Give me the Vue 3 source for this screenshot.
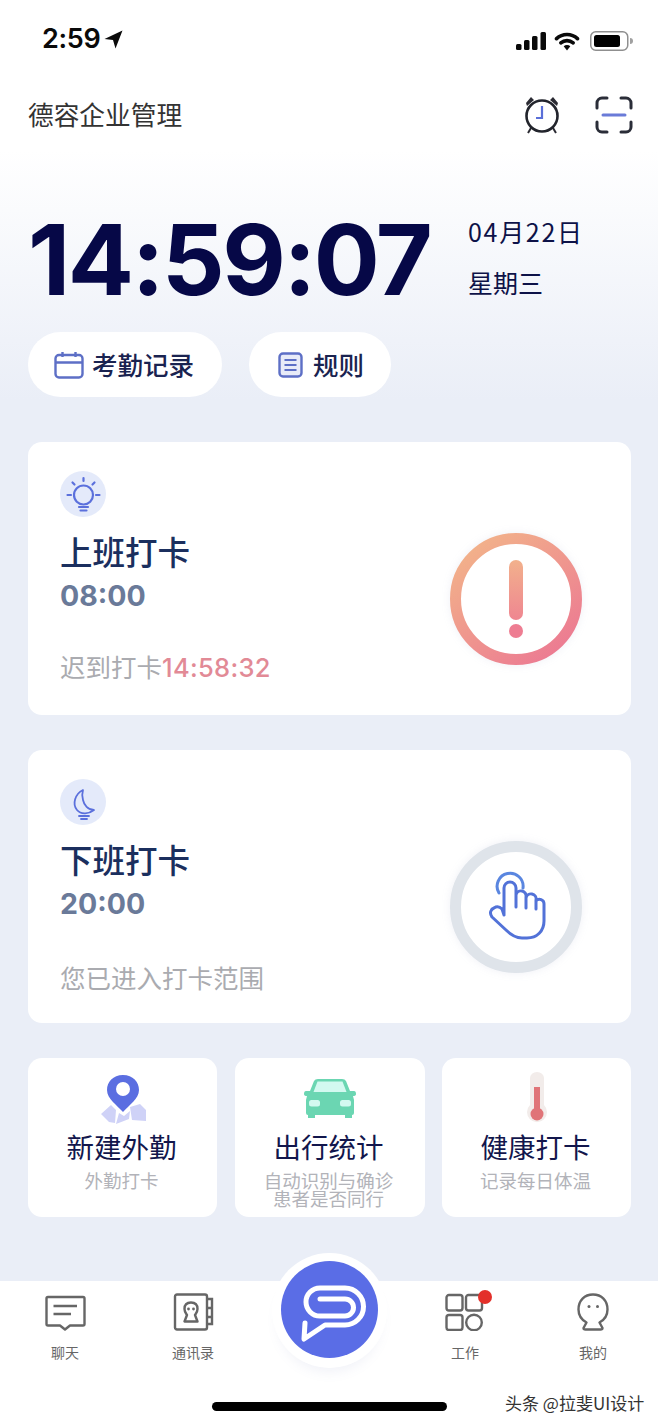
<script setup>
const tiles = [
  { key: 'pin', title: '新建外勤', sub: '外勤打卡' },
  { key: 'car', title: '出行统计', sub: '自动识别与确诊\n患者是否同行' },
  { key: 'temp', title: '健康打卡', sub: '记录每日体温' },
]
</script>

<template>
  <div class="page">
    <div class="status">
      <div class="status-left">
        <span class="st-time">2:59</span>
        <svg class="st-arrow" width="19" height="19" viewBox="0 0 19 19"><path d="M18.500 .5 L11.500 18.500 L9 10 L.5 9 Z" fill="#0a0a0a"/></svg>
      </div>
      <div class="status-right">
        <svg class="sig" width="30" height="18" viewBox="0 0 30 18"><rect x="0" y="12" width="5.500" height="6" rx="1.500"/><rect x="8" y="8" width="5.500" height="10" rx="1.500"/><rect x="16" y="4" width="5.500" height="14" rx="1.500"/><rect x="24.500" y="0" width="5.500" height="18" rx="1.500"/></svg>
        <svg width="26" height="19" viewBox="0 0 26 20"><path d="M2 7 A16 16 0 0 1 24 7" fill="none" stroke="#0a0a0a" stroke-width="3.800" stroke-linecap="round"/><path d="M6.500 11.500 A10 10 0 0 1 19.500 11.500" fill="none" stroke="#0a0a0a" stroke-width="3.800" stroke-linecap="round"/><path d="M9.500 15 A5 5 0 0 1 16.500 15 L13 19.500 Z" fill="#0a0a0a"/></svg>
        <svg width="43" height="20" viewBox="0 0 43 20"><rect x=".75" y=".75" width="37" height="18.500" rx="5" fill="none" stroke="#8f8f8f" stroke-width="1.500"/><rect x="4" y="4" width="26" height="12" rx="2.500" fill="#000"/><path d="M40 7 a3 3 0 0 1 0 6 z" fill="#a0a0a0"/></svg>
      </div>
    </div>

    <header class="head">
      <span class="brand">德容企业管理</span>
      <div class="head-icons">
        <svg width="38" height="40" viewBox="0 0 38 40">
          <path d="M3 8 L8 2 L11 5 L4 11 Z M35 8 L30 2 L27 5 L34 11 Z" fill="#2b2b33"/>
          <path d="M8 33 L5 38 M30 33 L33 38" stroke="#2b2b33" stroke-width="2"/>
          <circle cx="19" cy="21" r="15.500" fill="none" stroke="#22242c" stroke-width="2.600"/>
          <path d="M19 11 V23 H13" fill="none" stroke="#5a6fd8" stroke-width="2.200"/>
        </svg>
        <svg width="38" height="38" viewBox="0 0 38 38">
          <path d="M2 12 V7 a5 5 0 0 1 5 -5 H12 M26 2 H31 a5 5 0 0 1 5 5 V12 M2 26 V31 a5 5 0 0 0 5 5 H12 M26 36 H31 a5 5 0 0 0 5 -5 V26" fill="none" stroke="#2a2d38" stroke-width="3" stroke-linecap="round"/>
          <path d="M8 19 H30" stroke="#6a7bd8" stroke-width="3" stroke-linecap="round"/>
        </svg>
      </div>
    </header>

    <section class="clock-row">
      <div class="clock">14:59:07</div>
      <div class="date">
        <div class="date-a">04月22日</div>
        <div>星期三</div>
      </div>
    </section>

    <div class="pills">
      <div class="pill pill-a">
        <svg width="30" height="28" viewBox="0 0 30 28"><rect x="1.500" y="4" width="27" height="22.500" rx="3.500" fill="none" stroke="#5d6fc6" stroke-width="2.400"/><path d="M1.500 11.500 H28.500 M8.500 1 V6 M21.500 1 V6" stroke="#5d6fc6" stroke-width="2.400" fill="none"/></svg>
        <span>考勤记录</span>
      </div>
      <div class="pill pill-b">
        <svg width="25" height="26" viewBox="0 0 25 26"><rect x="1.500" y="1.500" width="22" height="23" rx="3.500" fill="#e8ebf8" stroke="#5d6fc6" stroke-width="2.400"/><path d="M6.500 8 H18.500 M6.500 13 H18.500 M6.500 18 H18.500" stroke="#5d6fc6" stroke-width="2"/></svg>
        <span>规则</span>
      </div>
    </div>

    <section class="card">
      <div class="card-left">
        <div class="round-ic">
          <svg width="46" height="46" viewBox="0 0 46 46">
            <g fill="none" stroke="#5b70dc" stroke-width="2.200" stroke-linecap="round">
              <circle cx="23.500" cy="24" r="9.500"/>
              <path d="M23.500 7 V10 M12.500 11.500 L14.500 13.500 M34.500 11.500 L32.500 13.500 M7.500 24 H11 M36 24 H39.500"/>
              <path d="M19 36 H28 M20.500 39.500 H26.500"/>
            </g>
          </svg>
        </div>
        <h2 class="c-title">上班打卡</h2>
        <div class="c-time">08:00</div>
        <div class="c-note">迟到打卡<span class="late">14:58:32</span></div>
      </div>
      <svg class="ring" width="132" height="132" viewBox="0 0 132 132">
        <defs>
          <linearGradient id="warn" x1="0.150" y1="0.050" x2="0.850" y2="0.950">
            <stop offset="0" stop-color="#f2b18a"/>
            <stop offset="1" stop-color="#ec7b92"/>
          </linearGradient>
          <linearGradient id="warn2" gradientUnits="userSpaceOnUse" x1="66" y1="28" x2="66" y2="100">
            <stop offset="0" stop-color="#f2b08c"/>
            <stop offset="1" stop-color="#ee7d92"/>
          </linearGradient>
        </defs>
        <circle cx="66" cy="66" r="60.500" fill="#fff" stroke="url(#warn)" stroke-width="11"/>
        <rect x="59" y="27" width="14" height="60" rx="7" fill="url(#warn2)"/>
        <circle cx="66" cy="98" r="7" fill="#ee7d92"/>
      </svg>
    </section>

    <section class="card card-2">
      <div class="card-left">
        <div class="round-ic">
          <svg width="46" height="46" viewBox="0 0 46 46">
            <g fill="none" stroke="#5b70dc" stroke-width="1.800" stroke-linecap="round" stroke-linejoin="round">
              <path d="M23 11 C15 15 12 25 17 31 C21 36 29 35 34 31 C28 31 24 26 23 21 C22 17 22 14 23 11 Z"/>
              <path d="M19 37 H29 M21 40 H27"/>
            </g>
          </svg>
        </div>
        <h2 class="c-title">下班打卡</h2>
        <div class="c-time">20:00</div>
        <div class="c-note c-note-2">您已进入打卡范围</div>
      </div>
      <svg class="ring ring-gray" width="132" height="132" viewBox="0 0 132 132">
        <circle cx="66" cy="66" r="60.500" fill="#fff" stroke="#dfe4ea" stroke-width="11"/>
        <g fill="none" stroke-width="3" stroke-linecap="round" stroke-linejoin="round">
          <path d="M49 52 A13 13 0 1 1 73 47" stroke="#5a86e0"/>
          <path d="M54 74 V47 a6 6 0 0 1 12 0 V66 M66 54 a5 5 0 0 1 10 2 V67 M76 57 a5 5 0 0 1 10 2 V68 M86 60 a4.500 4.500 0 0 1 8 3 V80 C94 90 87 97 77 97 H72 C65 97 60 93 56 89 L42 76 C39 72 41 68 44 67 C47 65 50 66 52 68 L54 74" stroke="#5272d8"/>
        </g>
      </svg>
    </section>

    <section class="tiles">
      <div v-for="t in tiles" :key="t.key" class="tile">
        <svg v-if="t.key === 'pin'" class="tile-ic pin" width="48" height="50" viewBox="0 0 48 50">
          <path d="M2 40 L12 31 L17 36 L16 49 L10 48 Z M17 50 L20 39 L25 42 L31 37 L30 45 Z M31 33 L41 30 L47 36 L47 47 L33 46 Z" fill="#cfd2f7"/>
          <path d="M24 1 C14 1 8 8 8 16 C8 25 18 31 24 38 C30 31 40 25 40 16 C40 8 34 1 24 1 Z" fill="#5b6ee1"/>
          <circle cx="24" cy="15" r="7" fill="#fff"/>
        </svg>
        <svg v-else-if="t.key === 'car'" class="tile-ic" width="54" height="50" viewBox="0 0 54 50">
          <path d="M11 5 Q12 3 15 3 H39 Q42 3 43 5 L47 15 H51 Q53 15 53 18 Q53 20 50 20 L51 24 V37 Q51 39 49 39 V42 H42 V39 H12 V42 H5 V39 Q3 39 3 37 V24 L4 20 Q1 20 1 18 Q1 15 3 15 H7 Z" fill="#6bd6b2"/>
          <path d="M14.500 5.500 H39.500 L43.500 16 H10.500 Z" fill="#d3f9f0"/>
          <rect x="6" y="24" width="11" height="6.500" rx="2.500" fill="#d3f9f0"/>
          <rect x="37" y="24" width="11" height="6.500" rx="2.500" fill="#d3f9f0"/>
        </svg>
        <svg v-else class="tile-ic" width="20" height="54" viewBox="0 0 20 54">
          <path d="M3 6 a7 6 0 0 1 14 0 V33 a10 10 0 1 1 -14 0 Z" fill="#f2ecea"/>
          <rect x="7" y="15" width="6" height="24" fill="#e07478"/>
          <circle cx="10" cy="42" r="6.500" fill="#e07478"/>
        </svg>
        <div class="t-title">{{ t.title }}</div>
        <div class="t-sub">{{ t.sub }}</div>
      </div>
    </section>

    <nav class="tabbar">
      <div class="tab">
        <svg width="42" height="38" viewBox="0 0 42 38">
          <path d="M4 4 H39 a1.500 1.500 0 0 1 1.500 1.500 V31 a1.500 1.500 0 0 1 -1.500 1.500 H26 L21 36.500 L16 32.500 H4 a1.500 1.500 0 0 1 -1.500 -1.500 V5.500 A1.500 1.500 0 0 1 4 4 Z" fill="none" stroke="#666" stroke-width="2.400" stroke-linejoin="round"/>
          <path d="M9.500 13 H33 M9.500 21 H27" stroke="#666" stroke-width="2.400"/>
        </svg>
        <span>聊天</span>
      </div>
      <div class="tab">
        <svg width="42" height="38" viewBox="0 0 42 38">
          <rect x="3" y="1.500" width="32" height="35" rx="2" fill="none" stroke="#666" stroke-width="2.400"/>
          <path d="M35 6 H40 V15 H35 M35 15 H40 V24 H35 M35 24 H40 V31 H35" fill="none" stroke="#666" stroke-width="2.400"/>
          <path d="M19 9.500 C14 9.500 12.500 13 12.500 16 C12.500 19 14 20.500 15 22 L12.500 28.500 H25.500 L23 22 C24 20.500 25.500 19 25.500 16 C25.500 13 24 9.500 19 9.500 Z" fill="none" stroke="#666" stroke-width="2.400" stroke-linejoin="round"/>
          <circle cx="16.500" cy="16" r="1.400" fill="#666"/><circle cx="21.500" cy="16" r="1.400" fill="#666"/>
        </svg>
        <span>通讯录</span>
      </div>
      <div class="tab tab-mid"></div>
      <div class="tab">
        <div class="work-wrap">
          <svg width="42" height="38" viewBox="0 0 42 38">
            <g fill="none" stroke="#666" stroke-width="2.400">
              <rect x="2.500" y="2" width="16" height="15.500" rx="2.500"/>
              <rect x="22" y="2" width="16" height="15.500" rx="2.500"/>
              <rect x="2.500" y="22" width="16" height="15" rx="2.500"/>
              <circle cx="30" cy="29.500" r="7.800"/>
            </g>
          </svg>
          <i class="dot"></i>
        </div>
        <span>工作</span>
      </div>
      <div class="tab">
        <svg width="42" height="38" viewBox="0 0 42 38">
          <path d="M14.500 29.500 C9 26.500 6.500 21.500 6.500 16.500 C6.500 7.500 12.500 1.500 21 1.500 C29.500 1.500 35.500 7.500 35.500 16.500 C35.500 21.500 33 26.500 27.500 29.500 L30.500 35 Q30.500 36.500 28.500 36.500 H13.500 Q11.500 36.500 11.500 35 Z" fill="none" stroke="#666" stroke-width="2.400" stroke-linejoin="round"/>
          <circle cx="17" cy="13.500" r="1.500" fill="#666"/><circle cx="25.500" cy="13.500" r="1.500" fill="#666"/>
        </svg>
        <span>我的</span>
      </div>
      <div class="fab">
        <svg width="97" height="97" viewBox="281 1261 97 97">
          <circle cx="329.500" cy="1309.500" r="48.500" fill="#5a6de6"/>
          <path d="M320 1299 H345 A8.500 8.500 0 0 1 345 1316 H320 A14 14 0 0 1 320 1288 H345 A18.500 18.500 0 0 1 345 1325 H325 L304 1339 L305 1323" fill="none" stroke="#fff" stroke-width="5" stroke-linecap="round" stroke-linejoin="round"/>
        </svg>
      </div>
      <div class="home"></div>
      <div class="mark">头条 @拉斐UI设计</div>
    </nav>
  </div>
</template>

<style scoped>
.page {
  width: 658px;
  height: 1425px;
  overflow: hidden;
  display: flex;
  flex-direction: column;
  background: linear-gradient(#fff 0, #fff 150px, #eaeef7 400px, #eaeef7 100%);
  font-family: "Noto Sans CJK SC", "Liberation Sans", sans-serif;
}
.status {
  height: 78px;
  flex: none;
  display: flex;
  justify-content: space-between;
  align-items: center;
  padding: 4px 25px 0 42px;
  box-sizing: border-box;
}
.status-left { display: flex; align-items: center; gap: 4px; margin-top: -4px; }
.st-time {
  font: 600 27px/30px Inter, "Liberation Sans", sans-serif;
  color: #0a0a0a;
  letter-spacing: -.3px;
}
.status-right { display: flex; align-items: center; gap: 10px; fill: #0a0a0a; }
.sig { margin-right: -2px; }
.head {
  height: 74px;
  flex: none;
  display: flex;
  align-items: center;
  justify-content: space-between;
  padding: 0 25px 0 28px;
}
.brand { font-size: 25.700px; line-height: 36px; color: #333; margin-top: -2px; }
.head-icons { display: flex; align-items: center; gap: 34px; }
.clock-row {
  flex: none;
  display: flex;
  align-items: flex-start;
  padding: 0 0 0 28px;
  margin-top: 53px;
  height: 110px;
}
.clock {
  width: 440px;
  font: 700 98px/110px Inter, "Liberation Sans", sans-serif;
  color: #060847;
  letter-spacing: -2.400px;
  white-space: nowrap;
}
.date {
  font-size: 25px;
  line-height: 36px;
  color: #0d1248;
  display: flex;
  flex-direction: column;
  gap: 15px;
  margin-top: 8px;
}
.date-a { letter-spacing: 1.700px; }
.pills { flex: none; display: flex; gap: 27px; padding-left: 28px; margin: 17px 0 45px; height: 65px; }
.pill {
  height: 65px;
  border-radius: 33px;
  background: #fff;
  display: flex;
  align-items: center;
  box-sizing: border-box;
  font-size: 25.500px;
  font-weight: 500;
  color: #1a2350;
}
.pill span { margin-top: -3px; }
.pill-a { width: 194px; padding-left: 26px; gap: 8px; }
.pill-b { width: 142px; padding-left: 29px; gap: 10px; }
.card {
  flex: none;
  width: 603px;
  height: 273px;
  margin-left: 28px;
  background: #fff;
  border-radius: 14px;
  display: flex;
  align-items: center;
  justify-content: space-between;
  padding: 0 49px 0 32px;
  box-sizing: border-box;
}
.card-2 { margin-top: 35px; }
.card-left { align-self: flex-start; padding-top: 29px; }
.round-ic { width: 46px; height: 46px; border-radius: 50%; background: #e4eafa; }
.round-ic svg { display: block; }
.c-title {
  margin: 12px 0 0;
  font-size: 32.500px;
  line-height: 44px;
  font-weight: 500;
  color: #1b2f5e;
}
.c-time {
  font: 700 28.500px/36px Inter, "Liberation Sans", sans-serif;
  color: #6a7a99;
  margin-top: 5px;
}
.c-note {
  margin-top: 34px;
  font-size: 25.500px;
  line-height: 36px;
  color: #aaabb0;
  white-space: nowrap;
}
.c-note-2 { margin-top: 37px; }
.late {
  font-family: Inter, "Liberation Sans", sans-serif;
  font-weight: 500;
  color: #e28a96;
  font-size: 25.500px;
  letter-spacing: .3px;
}
.ring { margin-top: 41px; filter: drop-shadow(0 0 4px rgba(120, 130, 180, .12)); }
.tiles {
  flex: none;
  display: grid;
  grid-template-columns: 189px 190px 189px;
  column-gap: 17.500px;
  padding-left: 28px;
  margin-top: 35px;
}
.tile {
  height: 159px;
  background: #fff;
  border-radius: 14px;
  overflow: hidden;
  display: grid;
  grid-template-rows: 68px 40px auto;
  justify-items: center;
  align-items: end;
}
.pin { margin-bottom: 2px; }
.t-title { font-size: 27.500px; line-height: 40px; color: #12164c; margin-left: -2px; }
.t-sub {
  font-size: 18.500px;
  line-height: 18px;
  color: #b2b3b9;
  text-align: center;
  white-space: pre-line;
  align-self: start;
  padding-top: 5px;
  margin-left: -2px;
}
.tabbar {
  position: relative;
  flex: none;
  margin-top: 64px;
  height: 144px;
  background: #fff;
  display: grid;
  grid-template-columns: 130px 126px 146px 126px 130px;
  align-content: start;
}
.tab {
  display: flex;
  flex-direction: column;
  align-items: center;
  padding-top: 12px;
  font-size: 14px;
  line-height: 20px;
  color: #666;
}
.tab svg { display: block; }
.tab span { margin-top: 11px; }
.work-wrap { position: relative; }
.dot {
  position: absolute;
  left: 34px;
  top: -3px;
  width: 14px;
  height: 14px;
  border-radius: 50%;
  background: #e3302a;
}
.fab {
  position: absolute;
  left: 272px;
  top: -28px;
  width: 115px;
  height: 115px;
  border-radius: 50%;
  background: #fff;
  display: flex;
  align-items: flex-start;
  justify-content: center;
  padding-top: 8px;
  box-sizing: border-box;
  box-shadow: 0 10px 12px -6px rgba(120, 130, 190, .1);
}
.fab svg { display: block; }
.home {
  position: absolute;
  left: 212px;
  top: 121px;
  width: 235px;
  height: 9px;
  border-radius: 5px;
  background: #000;
}
.mark {
  position: absolute;
  left: 505px;
  top: 110px;
  font-size: 17px;
  line-height: 24px;
  color: #333;
  white-space: nowrap;
  text-shadow: 0 0 1px #fff;
}
</style>
